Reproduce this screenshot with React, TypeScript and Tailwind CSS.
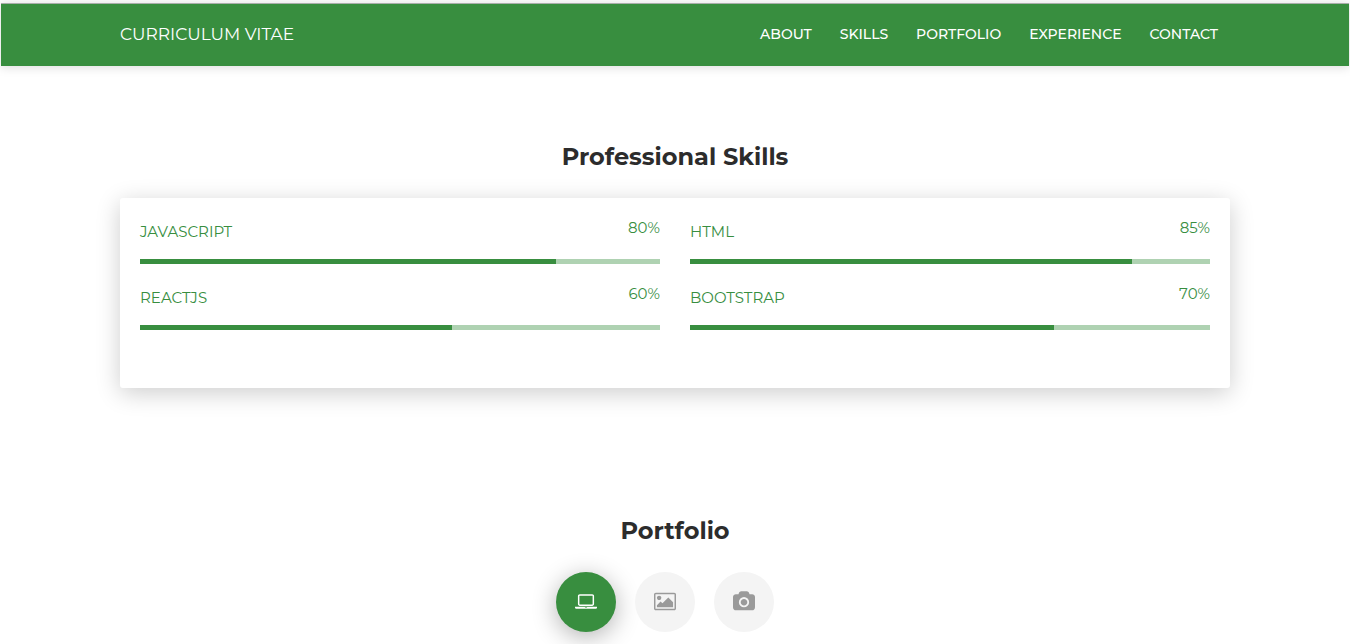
import React from "react";

const navLinks = ["About", "Skills", "Portfolio", "Experience", "Contact"];

const skills = [
  { name: "JAVASCRIPT", value: 80 },
  { name: "HTML", value: 85 },
  { name: "REACTJS", value: 60 },
  { name: "BOOTSTRAP", value: 70 },
];

const laptopPath =
  "M416 1280q-66 0-113-47t-47-113v-704q0-66 47-113t113-47h1088q66 0 113 47t47 113v704q0 66-47 113t-113 47h-1088zm-32-864v704q0 13 9.5 22.5t22.5 9.5h1088q13 0 22.5-9.5t9.5-22.5v-704q0-13-9.5-22.5t-22.5-9.5h-1088q-13 0-22.5 9.5t-9.5 22.5zm1376 928h160v96q0 40-47 68t-113 28h-1600q-66 0-113-28t-47-68v-96h1760zm-720 96q16 0 16-16t-16-16h-160q-16 0-16 16t16 16h160z";
const picturePath =
  "M640 576q0 80-56 136t-136 56-136-56-56-136 56-136 136-56 136 56 56 136zm1024 384v448h-1408v-192l320-320 160 160 512-512zm96-704h-1600q-13 0-22.5 9.5t-9.5 22.5v1216q0 13 9.5 22.5t22.5 9.5h1600q13 0 22.5-9.5t9.5-22.5v-1216q0-13-9.5-22.5t-22.5-9.5zm160 32v1216q0 66-47 113t-113 47h-1600q-66 0-113-47t-47-113v-1216q0-66 47-113t113-47h1600q66 0 113 47t47 113z";
const cameraPath =
  "M960 672q119 0 203.5 84.5t84.5 203.5-84.5 203.5-203.5 84.5-203.5-84.5-84.5-203.5 84.5-203.5 203.5-84.5zm704-416q106 0 181 75t75 181v896q0 106-75 181t-181 75h-1408q-106 0-181-75t-75-181v-896q0-106 75-181t181-75h224l51-136q19-49 69.5-84.5t103.5-35.5h512q53 0 103.5 35.5t69.5 84.5l51 136h224zm-704 1152q185 0 316.5-131.5t131.5-316.5-131.5-316.5-316.5-131.5-316.5 131.5-131.5 316.5 131.5 316.5 316.5 131.5z";

const tabs = [
  { label: "Web projects", path: laptopPath },
  { label: "Graphic design", path: picturePath },
  { label: "Photography", path: cameraPath },
];

function Header() {
  return (
    <header className="mx-px mt-[3px] border-t border-[#a9aeaa] bg-[#388e3f] text-white shadow-[0_1px_10px_rgba(0,0,0,0.15)]">
      <div className="mx-auto flex h-[62px] max-w-[1110px] items-center justify-between pb-0.5">
        <a href="#top" className="text-[17px] leading-6">
          CURRICULUM VITAE
        </a>
        <nav className="flex gap-7 pr-3 text-sm font-medium uppercase">
          {navLinks.map((link) => (
            <a key={link} href={`#${link.toLowerCase()}`}>
              {link}
            </a>
          ))}
        </nav>
      </div>
    </header>
  );
}

function Skill({ name, value }: { name: string; value: number }) {
  const id = `skill-${name.toLowerCase()}`;
  return (
    <div className="h-[66px]">
      <div className="flex h-[41px] items-start justify-between text-[15px] leading-5">
        <span id={id} className="pt-1">
          {name}
        </span>
        <span>{value}%</span>
      </div>
      <div
        role="progressbar"
        aria-labelledby={id}
        aria-valuenow={value}
        aria-valuemin={0}
        aria-valuemax={100}
        className="h-[5px] bg-[#afd2b2]"
      >
        <div className="h-full bg-[#388e3f]" style={{ width: `${value}%` }} />
      </div>
    </div>
  );
}

export default function App() {
  const [active, setActive] = React.useState(0);
  return (
    <div className="flow-root bg-white font-[Montserrat,Inter,sans-serif] text-[#2c2c2c]">
      <Header />
      <main className="mx-auto max-w-[1110px]">
        <section id="skills" className="pt-[73px]">
          <h2 className="text-center text-2xl leading-9 font-bold">Professional Skills</h2>
          <div className="mt-[23px] grid grid-cols-2 gap-x-[30px] rounded-[3px] px-5 pt-5 pb-[38px] text-[#388e3f] shadow-[0_5px_25px_rgba(0,0,0,0.2)]">
            {skills.map((skill) => (
              <Skill key={skill.name} name={skill.name} value={skill.value} />
            ))}
          </div>
        </section>
        <section id="portfolio" className="pt-[125px]">
          <h2 className="text-center text-2xl leading-9 font-bold">Portfolio</h2>
          <div role="tablist" aria-label="Portfolio" className="mt-[23px] flex justify-center gap-[19px] pr-5 pb-3">
            {tabs.map((tab, index) => (
              <button
                key={tab.label}
                type="button"
                role="tab"
                aria-label={tab.label}
                aria-selected={active === index}
                onClick={() => setActive(index)}
                className={
                  active === index
                    ? "flex size-[60px] items-center justify-center rounded-full bg-[#388e3f] pb-px text-white shadow-[0_5px_25px_rgba(0,0,0,0.3)]"
                    : "flex size-[60px] items-center justify-center rounded-full bg-[#f4f4f4] pb-px text-[#9a9a9a]"
                }
              >
                <svg viewBox="0 0 1920 1792" className="h-[21px] w-[22px]" fill="currentColor" aria-hidden="true">
                  <path d={tab.path} />
                </svg>
              </button>
            ))}
          </div>
        </section>
      </main>
    </div>
  );
}
